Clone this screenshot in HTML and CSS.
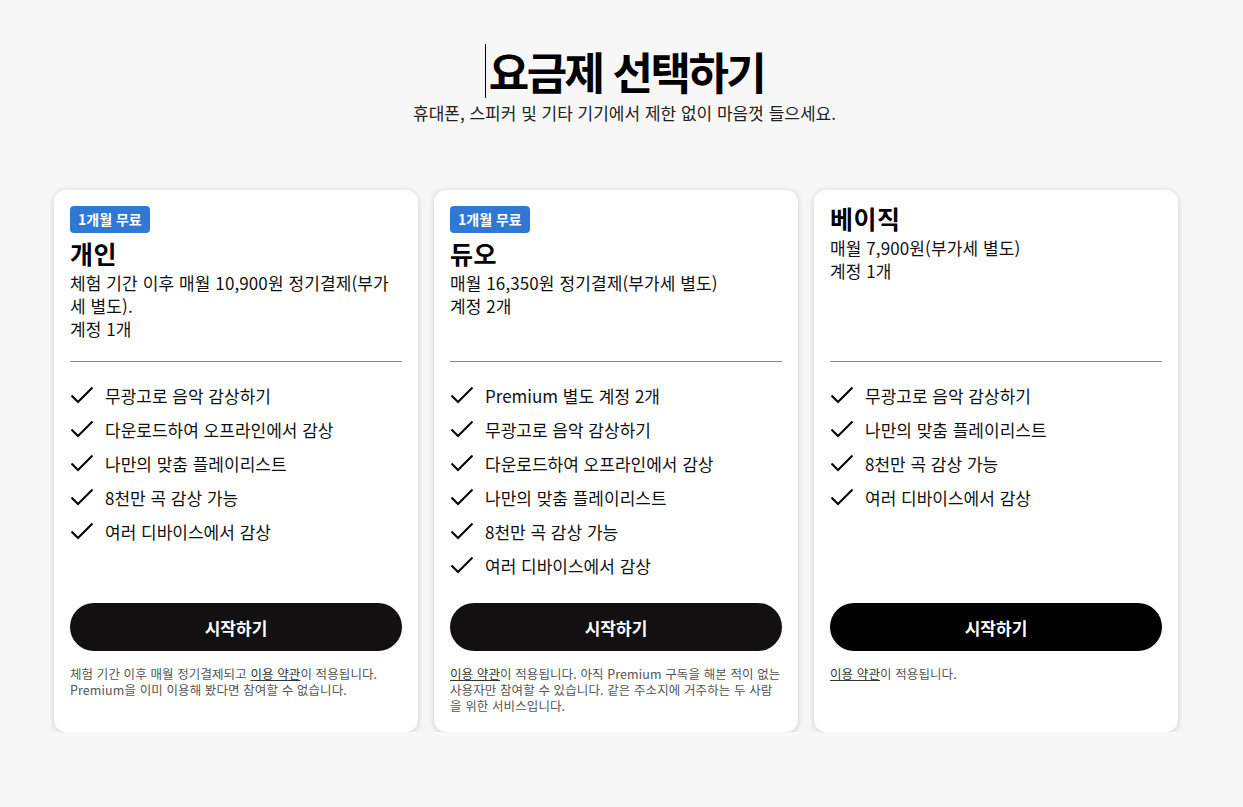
FILE: index.html
```html
<!DOCTYPE html>
<html lang="ko">
<head>
    <meta charset="UTF-8">
    <meta name="viewport" content="width=device-width, initial-scale=1.0">
    <title>요금제 선택하기</title>
    <link rel="stylesheet" href="styles.css">
</head>
<body>
    <header class="page-head">
        <h1><span class="caret"></span>요금제 선택하기</h1>
        <p class="lead">휴대폰, 스피커 및 기타 기기에서 제한 없이 마음껏 들으세요.</p>
    </header>

    <main class="plans">
        <section class="plan">
            <div class="plan-head">
                <span class="badge">1개월 무료</span>
                <h2>개인</h2>
                <p class="desc">체험 기간 이후 매월 10,900원 정기결제(부가세 별도).</p>
                <p class="desc">계정 1개</p>
            </div>
            <hr class="divider">
            <ul class="features">
                <li><svg viewBox="0 0 24 18"><path d="M1.5 9.5L8 16L22.5 1.5"/></svg>무광고로 음악 감상하기</li>
                <li><svg viewBox="0 0 24 18"><path d="M1.5 9.5L8 16L22.5 1.5"/></svg>다운로드하여 오프라인에서 감상</li>
                <li><svg viewBox="0 0 24 18"><path d="M1.5 9.5L8 16L22.5 1.5"/></svg>나만의 맞춤 플레이리스트</li>
                <li><svg viewBox="0 0 24 18"><path d="M1.5 9.5L8 16L22.5 1.5"/></svg>8천만 곡 감상 가능</li>
                <li><svg viewBox="0 0 24 18"><path d="M1.5 9.5L8 16L22.5 1.5"/></svg>여러 디바이스에서 감상</li>
            </ul>
            <button class="start">시작하기</button>
            <p class="terms">체험 기간 이후 매월 정기결제되고 <a href="#">이용 약관</a>이 적용됩니다. Premium을 이미 이용해 봤다면 참여할 수 없습니다.</p>
        </section>

        <section class="plan">
            <div class="plan-head">
                <span class="badge">1개월 무료</span>
                <h2>듀오</h2>
                <p class="desc">매월 16,350원 정기결제(부가세 별도)</p>
                <p class="desc">계정 2개</p>
            </div>
            <hr class="divider">
            <ul class="features">
                <li><svg viewBox="0 0 24 18"><path d="M1.5 9.5L8 16L22.5 1.5"/></svg>Premium 별도 계정 2개</li>
                <li><svg viewBox="0 0 24 18"><path d="M1.5 9.5L8 16L22.5 1.5"/></svg>무광고로 음악 감상하기</li>
                <li><svg viewBox="0 0 24 18"><path d="M1.5 9.5L8 16L22.5 1.5"/></svg>다운로드하여 오프라인에서 감상</li>
                <li><svg viewBox="0 0 24 18"><path d="M1.5 9.5L8 16L22.5 1.5"/></svg>나만의 맞춤 플레이리스트</li>
                <li><svg viewBox="0 0 24 18"><path d="M1.5 9.5L8 16L22.5 1.5"/></svg>8천만 곡 감상 가능</li>
                <li><svg viewBox="0 0 24 18"><path d="M1.5 9.5L8 16L22.5 1.5"/></svg>여러 디바이스에서 감상</li>
            </ul>
            <button class="start">시작하기</button>
            <p class="terms"><a href="#">이용 약관</a>이 적용됩니다. 아직 Premium 구독을 해본 적이 없는 사용자만 참여할 수 있습니다. 같은 주소지에 거주하는 두 사람을 위한 서비스입니다.</p>
        </section>

        <section class="plan">
            <div class="plan-head">
                <h2>베이직</h2>
                <p class="desc">매월 7,900원(부가세 별도)</p>
                <p class="desc">계정 1개</p>
            </div>
            <hr class="divider">
            <ul class="features">
                <li><svg viewBox="0 0 24 18"><path d="M1.5 9.5L8 16L22.5 1.5"/></svg>무광고로 음악 감상하기</li>
                <li><svg viewBox="0 0 24 18"><path d="M1.5 9.5L8 16L22.5 1.5"/></svg>나만의 맞춤 플레이리스트</li>
                <li><svg viewBox="0 0 24 18"><path d="M1.5 9.5L8 16L22.5 1.5"/></svg>8천만 곡 감상 가능</li>
                <li><svg viewBox="0 0 24 18"><path d="M1.5 9.5L8 16L22.5 1.5"/></svg>여러 디바이스에서 감상</li>
            </ul>
            <button class="start black">시작하기</button>
            <p class="terms"><a href="#">이용 약관</a>이 적용됩니다.</p>
        </section>
    </main>
</body>
</html>
```

FILE: styles.css
```css
body {
    margin: 0;
    background-color: #f7f7f7;
    color: #000;
    font-family: "Noto Sans CJK KR", "Noto Sans", sans-serif;
}
.page-head {
    text-align: center;
    padding: 44px 0 0 6px;
}
.page-head h1 {
    margin: 0;
    font-size: 44px;
    line-height: 54px;
    font-weight: 700;
    letter-spacing: -2.5px;
}
.caret {
    display: inline-block;
    width: 1px;
    height: 54px;
    background-color: #000;
    vertical-align: top;
    margin-right: 3px;
}
.lead {
    margin: 3px 0 0;
    font-size: 17px;
    line-height: 24px;
    color: #222;
}
.plans {
    display: grid;
    grid-template-columns: repeat(3, 1fr);
    gap: 16px;
    padding: 0 65px 0 54px;
    margin-top: 65px;
}
.plan {
    display: flex;
    flex-direction: column;
    background-color: #fff;
    border-radius: 12px;
    box-shadow: 0 1px 6px rgba(0, 0, 0, 0.18);
    padding: 16px 16px 18px;
}
.plan-head {
    min-height: 155px;
}
.badge {
    display: inline-block;
    background-color: #2f78d4;
    color: #fff;
    font-size: 14px;
    font-weight: 700;
    line-height: 27px;
    padding: 0 8px;
    border-radius: 4px;
    margin-bottom: 8px;
}
.plan-head h2 {
    margin: 0 0 6px;
    font-size: 25px;
    line-height: 24px;
    font-weight: 700;
    letter-spacing: 0.5px;
}
.desc {
    margin: 0;
    font-size: 17px;
    line-height: 23px;
    color: #111;
    letter-spacing: 0.1px;
}
.divider {
    border: none;
    border-top: 1px solid #878787;
    margin: 0;
}
.features {
    list-style: none;
    margin: 16px 0 21px;
    padding: 0;
    min-height: 204px;
}
.features li {
    display: flex;
    align-items: center;
    gap: 11px;
    height: 34px;
    font-size: 17px;
    color: #111;
}
.features svg {
    width: 24px;
    height: 18px;
    fill: none;
    stroke: #000;
    stroke-width: 2;
    flex-shrink: 0;
}
.start {
    height: 48px;
    border: none;
    border-radius: 24px;
    background-color: #121010;
    color: #fff;
    font-family: inherit;
    font-size: 17px;
    font-weight: 700;
}
.start.black {
    background-color: #000;
}
.terms {
    margin: 15px 0 0;
    font-size: 12.5px;
    line-height: 16px;
    color: #555;
    letter-spacing: 0.1px;
}
.terms a {
    display: inline-block;
    line-height: 16px;
    color: #333;
}
```
